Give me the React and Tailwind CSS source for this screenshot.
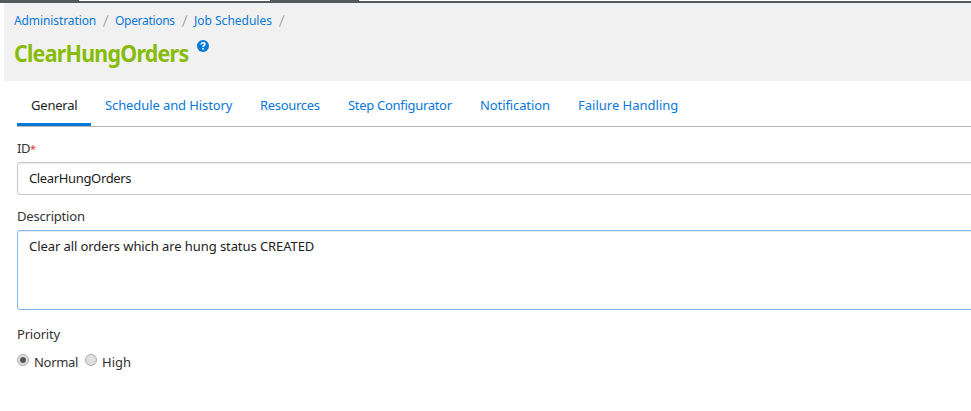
const crumbs = [
  { label: 'Administration', box: 'w-[82px]', type: 'tracking-[-0.1px]' },
  { label: 'Operations', box: 'w-[60px]', type: 'tracking-[-0.3px]' },
  { label: 'Job Schedules', box: 'w-[78px]', type: 'tracking-[0px]' },
];

const tabs = [
  { label: 'General', box: 'w-[74px]', type: 'tracking-[-0.2px]' },
  { label: 'Schedule and History', box: 'w-[155px]', type: 'tracking-[-0.1px]' },
  { label: 'Resources', box: 'w-[88px]', type: 'tracking-[-0.3px]' },
  { label: 'Step Configurator', box: 'w-[132px]', type: 'tracking-[-0.3px]' },
  { label: 'Notification', box: 'w-[98px]', type: 'tracking-[-0.1px]' },
  { label: 'Failure Handling', box: 'w-[128px]', type: 'tracking-[0px]' },
];

function Radio({ checked }) {
  return (
    <span className="mt-px flex size-[12px] items-center justify-center rounded-full border border-[#aaa] bg-linear-to-b from-[#e4e4e4] to-[#dcdcdc]">
      {checked && <span className="size-[6px] rounded-full bg-[#555]" />}
    </span>
  );
}

export default function App() {
  return (
    <div className="h-[411px] w-[971px] overflow-hidden bg-white font-['Noto_Sans',sans-serif] text-[13px] leading-[18px] text-[#333]">
      <div className="flex h-[3px] bg-[#56595b] pl-[79px]">
        <div className="h-px w-[191px] bg-white" />
        <div className="ml-[89px] h-px grow bg-white" />
      </div>
      <header className="ml-1 h-[78px] bg-[#f1f1f1] pl-[10px] pt-[9px]">
        <nav className="flex h-[18px] text-[12px] text-[#0a78d8]">
          {crumbs.map((c) => (
            <div key={c.label} className="flex">
              <span className={`${c.box} whitespace-nowrap`}><span className={c.type}>{c.label}</span></span>
              <svg className="mt-[3px] h-3 w-[19px]" viewBox="0 0 19 12" fill="none" stroke="#aaa" strokeWidth="1.2">
                <path d="M7.5 11.8L12 0.2" />
              </svg>
            </div>
          ))}
        </nav>
        <div className="flex">
          <h1 className="mt-[7px] w-[183px] origin-left scale-x-[0.93] whitespace-nowrap text-[23px] font-bold leading-[32px] tracking-[-0.8px] text-[#86bc06]">ClearHungOrders</h1>
          <svg className="mt-[10px] size-3" viewBox="0 0 12 12">
            <circle cx="6" cy="6" r="6" fill="#0579da" />
            <path d="M4.1 4.5C4.2 3.2 5 2.8 6 2.8c1.2 0 1.9.6 1.9 1.5C7.9 5.5 6.1 5.5 6.1 7" fill="none" stroke="#fff" strokeWidth="1.6" />
            <rect x="5.2" y="8" width="1.7" height="1.6" fill="#fff" />
          </svg>
        </div>
      </header>
      <main className="pl-[17px]">
        <div className="flex h-[46px] border-b border-[#b7b7b7]">
          {tabs.map((t, i) => (
            <div
              key={t.label}
              className={`${t.box} h-[45px] whitespace-nowrap pl-[14px] pt-[15px] ${i === 0 ? 'border-b-[3px] border-[#0579da] text-[#222]' : 'text-[#0a78d8]'}`}
            >
              <span className={t.type}>{t.label}</span>
            </div>
          ))}
        </div>
        <div className="mt-[12px] h-[18px] tracking-[-0.5px]">ID<span className="text-[11px] text-[#d9413a]">*</span></div>
        <div className="-mr-2 mt-[5px] h-[33px] rounded-l-[3px] border border-[#c9c9c9] pl-[11px] pt-[6px] text-[#222] shadow-[inset_0_1px_2px_rgba(0,0,0,0.1)]">
          <span className="tracking-[-0.35px]">ClearHungOrders</span>
        </div>
        <div className="mt-[12px] h-[18px] tracking-[-0.2px]">Description</div>
        <div className="-mr-2 mt-[5px] h-[80px] rounded-l-[3px] border border-[#80b7e7] pl-[11px] pt-[6px] text-[#222] shadow-[inset_0_1px_1px_rgba(0,0,0,0.08)]">
          <span className="tracking-[-0.08px]">Clear all orders which are hung status CREATED</span>
        </div>
        <div className="mt-[15px] h-[18px] tracking-[-0.2px]">Priority</div>
        <div className="mt-[10px] flex">
          <Radio checked />
          <span className="ml-[5px] w-[51px] tracking-[-0.3px]">Normal</span>
          <Radio />
          <span className="ml-[5px] tracking-[0px]">High</span>
        </div>
      </main>
    </div>
  );
}
